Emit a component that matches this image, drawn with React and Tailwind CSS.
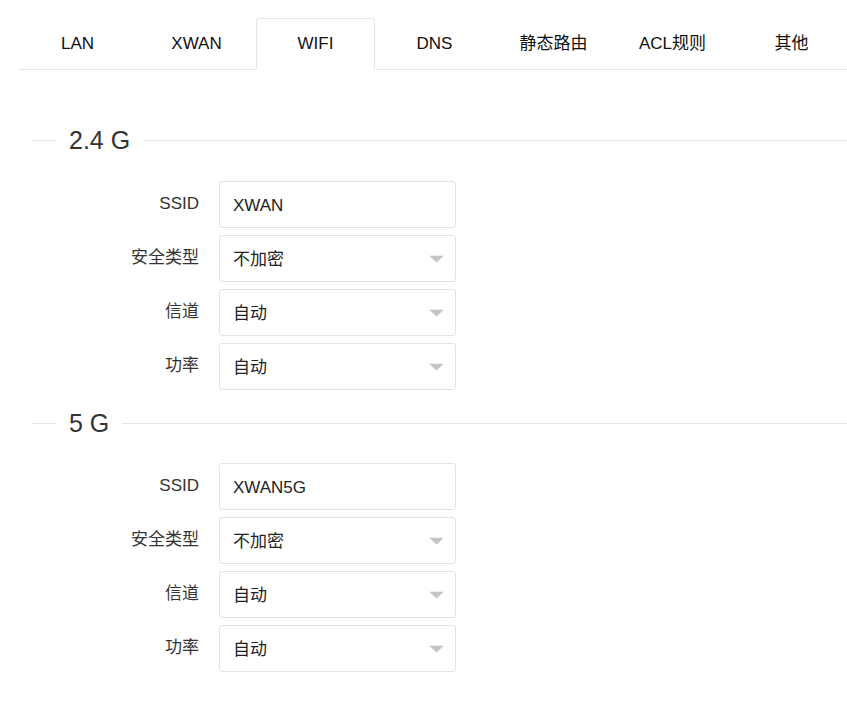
import React from "react";

const FONT = { fontFamily: '"Liberation Sans", "Noto Sans CJK SC", sans-serif' };

const tabs = ["LAN", "XWAN", "WIFI", "DNS", "静态路由", "ACL规则", "其他"];

function Legend({ title }) {
  return (
    <div className="flex items-center h-[29px] ml-[31px]">
      <div className="w-[25px] h-px bg-[#e5e5e5]" />
      <div className="px-[13px] text-[25px] leading-none text-[#333] font-light">{title}</div>
      <div className="flex-1 h-px bg-[#e5e5e5]" />
    </div>
  );
}

function Arrow() {
  return (
    <svg width="15" height="7" viewBox="0 0 15 7" className="absolute right-[11px] top-1/2 -translate-y-1/2">
      <polygon points="0,0 15,0 7.5,7" fill="#c4c4c4" />
    </svg>
  );
}

function Row({ label, value, select }) {
  return (
    <div className="flex items-center">
      <div className="w-[199px] pr-0 text-right text-[17px] text-[#333] leading-none -mt-[2px]">{label}</div>
      <div className="relative ml-[20px] w-[237px] h-[47px] border border-[#e3e3e3] rounded-[3px] flex items-center pl-[13px] text-[17px] text-[#222] leading-none pt-[2px]">
        {value}
        {select && <Arrow />}
      </div>
    </div>
  );
}

function Section({ title, ssid, mt, gap }) {
  return (
    <div style={{ marginTop: mt }}>
      <Legend title={title} />
      <div className="flex flex-col gap-[7px]" style={{ marginTop: gap }}>
        <Row label="SSID" value={ssid} />
        <Row label="安全类型" value="不加密" select />
        <Row label="信道" value="自动" select />
        <Row label="功率" value="自动" select />
      </div>
    </div>
  );
}

export default function App() {
  return (
    <div className="w-[847px] h-[701px] bg-white overflow-hidden" style={FONT}>
      <div className="pt-[18px] ml-[18px]">
        <div className="flex border-b border-[#e5e5e5] h-[52px] overflow-visible">
          {tabs.map((t) => (
            <div
              key={t}
              className={
                t === "WIFI"
                  ? "w-[119px] shrink-0 h-[52px] -mb-px flex items-center justify-center text-[17px] text-[#111] bg-white border border-[#e5e5e5] border-b-white rounded-t-[3px]"
                  : "w-[119px] shrink-0 h-[51px] flex items-center justify-center text-[17px] text-[#111]"
              }
            >
              {t}
            </div>
          ))}
        </div>
      </div>
      <Section title="2.4 G" ssid="XWAN" mt={56} gap={26} />
      <Section title="5 G" ssid="XWAN5G" mt={19} gap={25} />
    </div>
  );
}
